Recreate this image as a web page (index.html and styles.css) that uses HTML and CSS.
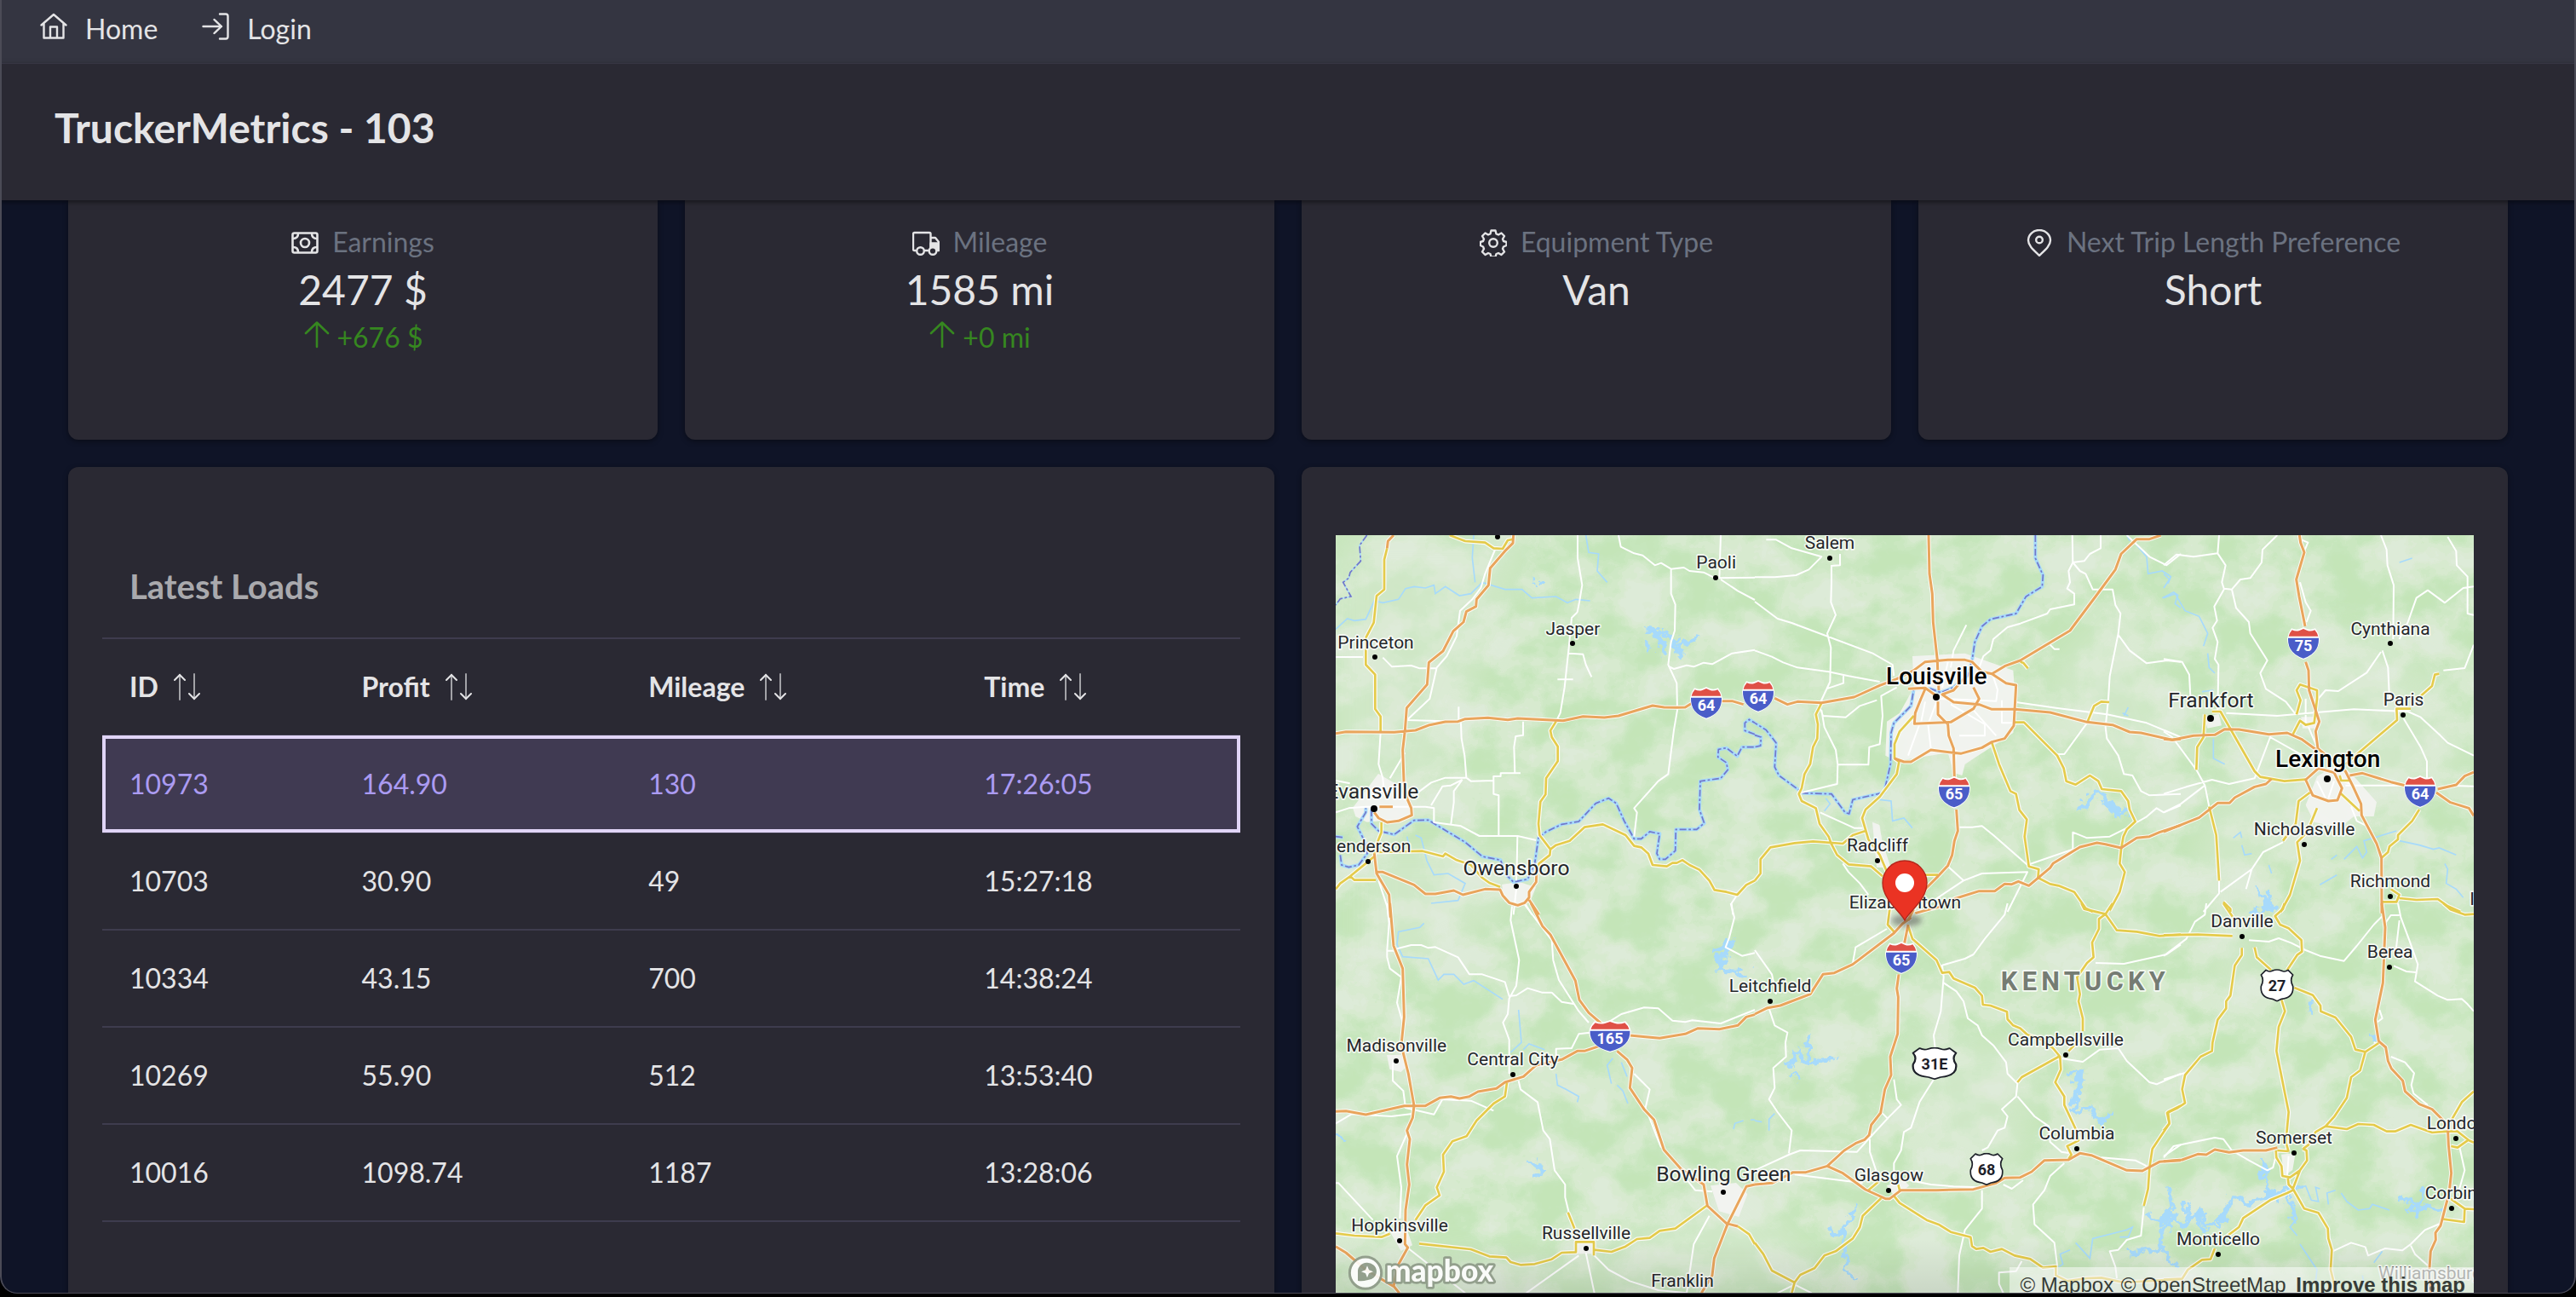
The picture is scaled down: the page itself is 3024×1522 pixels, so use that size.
FILE: index.html
```html
<!DOCTYPE html>
<html lang="en">
<head>
<meta charset="utf-8">
<title>TruckerMetrics - 103</title>
<meta name="viewport" content="width=device-width, initial-scale=1">
<link rel="stylesheet" href="styles.css">
</head>
<body>
<svg class="sprite" aria-hidden="true">
  <symbol id="i-sort" viewBox="0 0 32 32">
    <g fill="none" stroke="currentColor" stroke-width="2" stroke-linecap="round">
      <path d="M7 2V31M24 1V30" opacity=".65"/>
      <path d="M1 8 7 2l6 6M18 24l6 6 6-6"/>
    </g>
  </symbol>
  <symbol id="i-up" viewBox="0 0 32 32">
    <path d="M16 30V2M3 14 16 1.500 29 14" fill="none" stroke="currentColor" stroke-width="2.600" stroke-linecap="round" stroke-linejoin="round"/>
  </symbol>
</svg>
<div class="window">
  <nav class="menubar" aria-label="Main">
    <a class="menu-link" href="#home">
      <svg class="icon" viewBox="0 0 32 32" fill="none" stroke="currentColor" stroke-width="2.400" stroke-linecap="round" stroke-linejoin="round"><path d="M1.500 14.500 16 2l14.500 12.500M4.500 12.500V29.500h23V12.500M12 29V16.500h8V29"/></svg>
      <span>Home</span>
    </a>
    <a class="menu-link" href="#login">
      <svg class="icon" viewBox="0 0 32 32" fill="none" stroke="currentColor" stroke-width="2.400" stroke-linecap="round" stroke-linejoin="round"><path d="M1.500 16H23M14.500 8 23 16l-8.500 8M21 1.500h7a2.500 2.500 0 0 1 2.500 2.500v24a2.500 2.500 0 0 1-2.500 2.500h-7"/></svg>
      <span>Login</span>
    </a>
  </nav>
  <header class="page-header"><h1>TruckerMetrics - 103</h1></header>

  <main class="dashboard">
    <section class="card stat">
      <div class="stat-label">
        <svg class="icon" viewBox="0 0 32 32" fill="none" stroke="currentColor" stroke-width="2.600"><rect x="1.500" y="4.500" width="29" height="23" rx="2"/><circle cx="16" cy="16" r="5"/><path d="M2 11q6 0 6-6M30 11q-6 0-6-6M2 21q6 0 6 6M30 21q-6 0-6 6"/></svg>
        <span>Earnings</span>
      </div>
      <strong class="stat-value">2477 $</strong>
      <div class="stat-delta"><svg class="icon"><use href="#i-up"/></svg><span>+676 $</span></div>
    </section>
    <section class="card stat">
      <div class="stat-label">
        <svg class="icon" viewBox="0 0 32 32" fill="none" stroke="currentColor" stroke-width="2.400" stroke-linejoin="round"><path d="M4.500 25H2.500A1.500 1.500 0 0 1 1 23.500V5.500A1.500 1.500 0 0 1 2.500 4H20a1.500 1.500 0 0 1 1.500 1.500V25H14"/><path d="M21.500 10H27l4 5v10h-2"/><path d="M21.500 16.500H31V24h-3l-4-3-2.500 1z" fill="currentColor"/><circle cx="9.500" cy="25.500" r="4.300"/><circle cx="24" cy="25.500" r="4.300" class="wheel"/></svg>
        <span>Mileage</span>
      </div>
      <strong class="stat-value">1585 mi</strong>
      <div class="stat-delta"><svg class="icon"><use href="#i-up"/></svg><span>+0 mi</span></div>
    </section>
    <section class="card stat">
      <div class="stat-label">
        <svg class="icon" viewBox="0 0 32 32" fill="none" stroke="currentColor" stroke-width="2.400" stroke-linejoin="round"><circle cx="16" cy="16" r="4.800"/><path d="M13.500 1.500h5l1 4 2.500 1 3.500-2 3.500 3.500-2 3.500 1 2.500 3.500 1v4l-3.500 1.500-1 2.500 2 3.500-3.500 3.500-3.500-2-2.500 1-1 3.500h-5l-1-3.500-2.500-1-3.500 2L3 26.500 5 23l-1-2.500L.800 19v-4L4 14l1-2.500L3 8l3.500-3.500 3.500 2 2.500-1z"/></svg>
        <span>Equipment Type</span>
      </div>
      <strong class="stat-value">Van</strong>
    </section>
    <section class="card stat">
      <div class="stat-label">
        <svg class="icon" viewBox="0 0 32 32" fill="none" stroke="currentColor" stroke-width="2.400" stroke-linejoin="round"><path d="M16 30.800C10 25 3 19.500 3 13a13 12 0 0 1 26 0c0 6.500-7 12-13 17.800z"/><circle cx="16" cy="12.500" r="3.800"/></svg>
        <span>Next Trip Length Preference</span>
      </div>
      <strong class="stat-value">Short</strong>
    </section>

    <section class="card panel">
      <h2 class="panel-title">Latest Loads</h2>
      <table class="loads">
        <colgroup><col class="col-id"><col class="col-profit"><col class="col-mileage"><col class="col-time"></colgroup>
        <thead>
          <tr>
            <th scope="col"><button type="button" class="sort">ID <svg class="icon"><use href="#i-sort"/></svg></button></th>
            <th scope="col"><button type="button" class="sort">Profit <svg class="icon"><use href="#i-sort"/></svg></button></th>
            <th scope="col"><button type="button" class="sort">Mileage <svg class="icon"><use href="#i-sort"/></svg></button></th>
            <th scope="col"><button type="button" class="sort">Time <svg class="icon"><use href="#i-sort"/></svg></button></th>
          </tr>
        </thead>
        <tbody>
          <tr class="selected"><td>10973</td><td>164.90</td><td>130</td><td>17:26:05</td></tr>
          <tr><td>10703</td><td>30.90</td><td>49</td><td>15:27:18</td></tr>
          <tr><td>10334</td><td>43.15</td><td>700</td><td>14:38:24</td></tr>
          <tr><td>10269</td><td>55.90</td><td>512</td><td>13:53:40</td></tr>
          <tr><td>10016</td><td>1098.74</td><td>1187</td><td>13:28:06</td></tr>
        </tbody>
      </table>
    </section>

    <section class="card panel" aria-label="Map">
      <div class="map">
      <svg class="map-canvas" viewBox="0 0 4008 2700">
        <defs>
          <filter id="terrain" x="0" y="0" width="1" height="1" color-interpolation-filters="sRGB">
            <feTurbulence type="fractalNoise" baseFrequency="0.006 0.007" numOctaves="5" seed="11"/>
            <feColorMatrix values="1 0 0 0 0  1 0 0 0 0  1 0 0 0 0  0 0 0 0 1"/>
            <feComponentTransfer>
              <feFuncR type="discrete" tableValues=".87 .87 .87 .87 .87 .87 .86 .845 .845 .825 .81 .795 .78 .775 .77 .77 .77 .77 .77 .77"/>
              <feFuncG type="discrete" tableValues=".923 .923 .923 .923 .923 .923 .92 .918 .918 .915 .912 .907 .903 .901 .9 .9 .9 .9 .9 .9"/>
              <feFuncB type="discrete" tableValues=".85 .85 .85 .85 .85 .85 .835 .815 .815 .79 .775 .755 .74 .73 .725 .725 .725 .725 .725 .725"/>
            </feComponentTransfer>
          </filter>
          <filter id="rough" x="-10%" y="-10%" width="120%" height="120%">
            <feTurbulence type="fractalNoise" baseFrequency="0.03" numOctaves="3" seed="4"/>
            <feDisplacementMap in="SourceGraphic" scale="60" xChannelSelector="R" yChannelSelector="G"/>
          </filter>
          <filter id="soft" x="-20%" y="-20%" width="140%" height="140%"><feGaussianBlur stdDeviation="50"/></filter>
          <filter id="pin-shadow" x="-50%" y="-100%" width="200%" height="300%"><feGaussianBlur stdDeviation="9"/></filter>

          <g id="local">
            <g transform="translate(-24 -24)"><path d="M585 75 550 160 535 210 505 250 462 290 450 380 415 450 380 490 355 600 275 675 460 680M24 453H120M190 455l32 32 68-4 30 10h60M876 24v81l16 95-10 60-7 35-20 20-10 105-15 140-15 90-15 30M845 440l50 3 10 37 20 43M805 532h55M1020 24l8 41 47 23 30 7 43 35 22-8 35 21 45-5 20 12 50 5 40 20M1205 143v87l15 38-2 92-13 40-10 80 30 65 2 95-12 70-20 155-35 25-85 95 10 15-10 85M1380 24l-5 151 125-2M1380 180l60 40 60 32M1195 485l20 10 45-13 25 5 35-14 30 5 70-38 80-12M182 720l-7 110 15 50 5 60M268 790l-53 90M457 628v52M465 685l2 55 11 60 6 78 16 12 80-2v47l18 5v143M684 680v48l-26 4-6 38 3 92M580 888v-15h25v-11h70M484 878h-74l-50 17-60 45M470 885l-30 40v40l-10 75M470 885l-40 20-30 3-40 67M24 1000l46-15 60-5h210l30 5v50l95 13 65 35h135l65 15M664 1085l-2 105-2 50M660 1270l-10 90M690 1320l25 40M1438 1290l-20 30 5 40M175 1240l30 90 5 40M24 888l50 10"/></g>
            <g transform="translate(1476 -24)"><path d="M40 40h35l55 30 105 30-45 45-45 20-75 7H0M270 130v60l-2 70 17 45-30 65 13 50-3 120-35 75M300 90v40l-32 2M0 258l80 60 50 15 285 107 70 40 5 40M0 430l60 22 40 20 50 18 110 15 70 15 110 20M312 520v25l-60 20M1118 24l2 96-15 30 5 40-10 22 25 18v38l-85 17-10 15-95 35-45 13-50 42-10 40-25 20-15 40M1218 24v46l-38 20-20 25-40 5 25 30 20 10 25 55h70l10 55 18 30-8 70-30 150-5 80-10 100 5 40 40 60 20 65 30 5 30 55 30 15 110-5M1280 375l40 55 60 45 70-10 50 5M1310 24l80 76 60 30 50-40M920 612l140 20 180 23 140 30 120 50M1170 685l-80 110h-25M235 640l10 60 40 80 7 52h108l3-62 37-10 10-100-5-70 55-30M225 620l15 40 80 5 50-40 60-20M292 832l-2 68-125 30M700 870l10-90M745 340l-45 90-10 60M380 1055h-30l-120-55M720 1052h45l35-4 40 32 120 105 160-55v-60l50 20 80-5 60-30 35-20 35-20 35-30 25 15 60-25M310 1180l20 30 40 40 30 40M600 1330l135-90-55-50M735 1240l65-25 160-5-40 80-30 60M650 600l200 8 5-40-20-60M690 620l120 70v40h-90M870 605v80h45M680 470l-20 90M640 610l-30 80 10 85M600 610l-15 75M540 800l40-110M770 640l80 90M1040 410l15 15h18"/></g>
            <g transform="translate(2916 -24)"><path d="M0 130l45-38 60 8 85-12 5-64M190 88l28 42-13 60 7 22 28 3 30-35 35-5 40-55 3-45 52-51M240 215l15 65 45 50 5 40 60 95-25 45 20 55 70 45 35 45M212 215l-34 60 10 50-16 25 18 50-10 60 13 20-3 160M0 460l65 10 25 45 5 95M765 24l20 51 3 55 22 70-2 190M830 390l30-60 30-85 40-27 60 44 65-52 37-5M1000 30l30 50 2 50 38 40v130l22 5M770 430l20 60 5 110M765 435l-50 73-100 65-45-3-30 35M985 500l75-8 32-82M220 650l180 10 60-5 210-18 190 8 45 20 70 65 25 25 92 45M845 670l60 100 22 50v60M640 905h200M1000 905l92 3M0 715l30 20 85 115 30 55 15 75M0 935l80-25 90-25 60 15 90-20 55-145 115 65M195 1240v45l-55 65M200 1280l110-80 40-60 70-35M0 1000l60-30 85-65M485 40l23 10-13 30M480 190l20 70 18 30-15 40M500 600v90M600 880l60 20M510 700l30 70M540 890l30 60M600 890l-20 60M660 980l20 50 30 15M290 1270l20-70"/></g>
            <g transform="translate(-24 1296)"><path d="M645 10l-5 50 30 140-10 90-25 45-5 55-17 30 22 60v120M240 160l50-13h35l25 10 25-3 80 36 40 60h45l80 27 15 50 25-3 40-25 50 15h35l35 33 45 8M690 5l95 125 5 70 20 70 70 110 35 40M205 0l7 70-7 95v25l10 40 40 30-15 90 20 70M205 167h35M990 415l40-25 80-23 50 3 50 43 45 5 25-6 100 11 120-48M1415 0l13 50-18 70-13 35 58 30 45-10M225 560v65l37 35 8 60 100 23 30-53 100 5 80 35M24 775l56-33 140 8 80-10M280 800l-40 90 15 110-5 110M24 985h10l121 130M668 625l7 30 60 45 20 100 23 30 17 110 37 50v45l13 53M880 1240l-185 132M905 1230l30 142M935 1240l50 50 75 40 100 32 100 10 25-172 55-100M280 1215l200 157M1075 600l55 55-15 65 55 140M800 550v-38l55-2 25-50 40-5M1250 960l40 50 60 5"/></g>
            <g transform="translate(1476 1296)"><path d="M890 0l-10 40-70 85-40 55-30 15-80 23 5 42-10 120-25 85 5 45M630 620l-50 80-30 90-25 15-10 65-25 45v65M665 280l45 30 25 35 15 60 35 25 15 35 40 35 45 60 5 40 35 35-5 45-50 45 20 25-10 40-25 10-35 60-20 10M925 680l60 70 50 35 5 55 40 35 30 5M490 620l10 70 15 20-45 45-65 70-45 50-200-5-40 15L0 940M465 90l-110 65-10 55M0 165l60 85 15 70M50 370l20 60 45 25-7 35 2 50-45 40 5 70-20 40 30 45 50 65-10 80M405 830v45l25 75M140 955l120 15 120 15M545 975l75 15 80 7 90 3M1500 145l-50 35-150 33-100-3M1075 545l80 13 60-43 65-5 30 45 80 75 25 7 85-37M1090 915l-50 45-20 50-40 50 5 70 70 65 10 80M800 1010v65l-60 75-20 90-5 132M875 990l30 15 40-30M1220 895l120 10 40 20M1440 890l60-40M1370 1070l-10 100-50 15-30 35-30 5 20 55 5 40M940 1260l-20 35-60 5v40l15 32M450 740l20 20M80 1372l60-30 60 30"/></g>
            <g transform="translate(2916 1296)"><path d="M150 0l-5 40-35 25-30 60-80 60M300 130l70 5 35-12 45 17 50 25 50 20 85 18 45-53 60-75 30-30M825 0l10 50 30 80 30 85-10 60 80 50 35 15 50-3 20 18 22 25M810 220l45 20 35 3M830 60l-15 130M780 70l20-28h30M0 895l35-40 145-30 30 5 30 40 60 35 65 35 20-10 10-40M0 620l75-23M800 540l50 20 32 38-10 42 8 30 50 40M760 375l10 30-20 15M1040 850l20 90-20 70M595 1225l65-30 50 15 10 30 60-25 60 7 30-22 50-50 60-25M870 1205l15 30 45 40M440 890l-5 70M740 490l35 10"/></g>
          </g>
          <g id="highways">
            <g transform="translate(-24 -24)"><path d="M205 70 195 110V215L168 238 158 332 130 385V480L163 515V636L182 662V715M425 24l55 21 70 5 30 20 32 2 18-30 20-4M800 680l-20 32 5 23 21 33v52l-41 60-2 57-18 25-7 78 4 40 38 50-2 20-38 30-5 20M185 1035v35l-20 50-5 25M165 1140l165-4 72 19 8-10 40 23 50 17 40 45 25 18 38 14M780 1130l20-15 48-15 52-48 65-10 80 38 30 38 25 5 25 22 15 40 50 5 20-12h15l20-10 25 17 35 17 35 38 18 33 42 7 38 10 32-35 30-15M160 1155l-85 70-35 25-16 20M75 1225l15 13h75"/></g>
            <g transform="translate(1476 -24)"><path d="M235 615l-20 40 7 35-2 50-15 30-10 60-20 35-10 50-10 20 10 25 50 25 13 55 32 45 10 27 20 38 40 33 80 7 40 35M0 1240l20-25v-50l35-42 85-15 65-6 105 8 35-30 45-15M560 660l-50 55-18 45v50l16 12-8 43-60 80-50 45-12 30 22 75 40 55 30 70M600 1220h45M935 470l10 3 17 20M1248 612l-28-2-25 15-23 55M915 683h33l117 117 23 45 9 45 33 12 50-32 30 20 12 28 68 7 25 35 5 30 20 42-30 28-12 25-8 45-5 50 18 30-18 70-35 65M835 755l25 75 40 95 20 10 12 57 26 33-8 60 15 105 35 10-3 30 43 22 30 6 55 22 40 57 25 13"/></g>
            <g transform="translate(2916 -24)"><path d="M145 655l-5 80-22 35-3 80M170 645h30l120 210 20 20 85 15 75-6M455 725l25-48 20 15 30-7 10-85v-30l-60-20-12 20 14 35-14 50M970 512l-15 3-10 40-40 35M870 635h-50l2 40-182 155M620 870l5 18h30M620 930l70 65M515 930l-40 30-10 80-45 60M540 985l-35 85-35 35 10 65-35 120-33 60M900 990l-25 40-50 50v15l-30 25-5 20-23 20M800 1270l30 20-10 25h-50M830 1302l60 6 75-3 35 25 45 20M160 980l25 100 10 160M210 1315l25 25v10"/></g>
            <g transform="translate(-24 1296)"><path d="M627 632l-7 48-40 25-60 60-35 55-50 18-33 47 3 60-25 55 10 28-50 35-35 52M24 1162l66 8 95 5 30-12M318 1198l182 20 65 25 60 4 15 16 35 10 50-3 60-17 35-23 50-2v-36h63v48M842 1088l23 57M935 1220l60 7 50-19 40-26 45-4 35-25 55-8 110-80M1440 1137l40 28 20 35"/></g>
            <g transform="translate(1476 1296)"><path d="M475 20l-7 55 24 27M540 80l15 45 85 75 20 45 25-3 15 23 75 32 25 28 3 32 27 3 58 22 2 26 20 22 25 10 25 23 40 12 50 35 25 30 3 45-20 45 32 50v30l40 85 10 40-40 20 15 30-10 15M925 630l15-18 130-72M1155 450v-45l-15-60 5-25-10-60 35-50 23-20-5-52 24-48V55l23-17 25-38M1150 0l10 20 75 18 40 57 70 5 80 15 75-5M1155 470l-50 50M1500 712l-45 23 5 40-30 45-30 45-10 65-5 75-15 60M445 1038l-65 62-10 40-25 40-60 45-40 15-35 45-50 23-20 27-10 37M140 1335l-80-42-30-58-30-40M490 1030l20 25 95 60 45 17 40 25 70 18 5 32 15 10 25-4 25 14 40-10 45 23 55 12 45 31 45-5v32l40 20 70-10 50-2 80 17 200-12M400 1010l35-30M510 1010l-5-20"/></g>
            <g transform="translate(2916 1296)"><path d="M0 112l120-2 122 5M275 157v25l-25 38-15 105-15 20v25l-30 40-18 80-2 30-40 20-55 65-10 50 10 48-25 17-38 18 8 37-20 25M210 0l33 48M425 0l-5 20-28 25 18 30 30 13 45 42 2 40-17 12-35 53M320 155l8 35 50 45M415 340l12 40-22 55-8 85 43 215-10 105 10 35M460 297l65 26 27 37 1 20 52 22 55 68 15 45 35 8 47-31M710 523l-18 65-32 24-15 73-45 67-30 33-35 20-25 45-20 15M570 785l75 10 40-18 55 3 45 23h30l55-23 75 27 55-4h35l40 32 17 7M1012 855l23 5 35-25M1015 760l35-60 42-38M400 870l40 3M395 870l2 25 18 30 3 35 27 5 35-25 25-35-2-35-13-5M437 965l3 25 15 15 25-65M455 1010l-20 10-60 25-95 63-15 32-40 30M180 1215l-15 38-30 2-50 35-20 32-65 3M455 1005l40 70 50 15 33 55 2 35 12 40-4 70 12 50v32M985 0l25 22 50 18 32-2M1010 1040l50 35 32 2M1060 1075l-2 47-73-10"/></g>
          </g>
          <g id="motorways">
            <g transform="translate(-24 -24)"><path d="M228 24l-20 21-3 25M24 722l36-6 170 2 75-7 50-19 55-11 45-1 25-9 80-4 70 7 35-5 160 8 70-15 75 4 50-6 120-36 40 6 45 1 30-1 35-22h130l40 12M650 24l-2 28-28 28-52 60-6 60-42 50-2 25-34 18-10 37-36 32-36 70-50 40-6 78-72 82-6 80-8 68 4 110 11 60 15 35 2 25-47 20-40 5-30-15-15-20M178 980h47M160 1145l8 70 44 75 5 80M168 1210h22l110 45 40 32h35l65-12 32 15 78-20 53 2 9 20 23 26 30 9 25-9 15-18v-20l25-35 2-55M705 1308l35 52"/></g>
            <g transform="translate(1476 -24)"><path d="M612 24l3 136 10 70 3 100 15 135 1 35 4 70M70 598l45 22 35-10 85 4 115-20 90-41 60-23 60-30 40-30 80-7h60l25 7 35 35 35 7 45-27 55-20 175-105 90-120 70-95 20-55 55-52h45l40-14M835 512l50 33 35 7-5 88-3 55-32 45-45 12-35 20-75 21-105-13-70 42h-25l-33-12M600 565l-15 35-20 50-3 38 128-6 80-47 20-35-20-40M540 565l60-3 40 28M735 530l-35 40-40 15 40 27 90 8 45 17h80l125 11 130 34 90 10 60 25 40 3 110 25 30-3M645 610v45l35 35 3 40 17 45 3 105M710 990l5 75-12 35-8 50-15 37-35 38-45 45-30 50-30 60M700 1305l90-28h55l35-25 25 1 23-10 37 15 75-63 10-15 95-58 60-15 30 5 55 13 55-35 45-5 35-15 75-25"/></g>
            <g transform="translate(2916 -24)"><path d="M478 24l4 26 13 35-28 95 10 60 21 105M500 470l10 30 2 70 36 110-13 35 8 60 97 80 25 50 30 65 2 40 53 100 17 50 1 195M0 742l30 3 75-15 75-3 35-20 50 1 105 17 65-5 50 22 60 43M655 870l45-8 100 31 50 12M965 918l65-15 30-31 32-14M960 930l50 35 65 20 17 27M0 1068l125-50 65-51h42l18-19 70-38 40-10 20-18M545 845l-45 40 25 55 55 20 32-3 16-42-28-55z"/></g>
            <g transform="translate(-24 1296)"><path d="M215 0l13 150 32 80 5 170-10 100 25 100 20 113-5 42-20 45 10 30-10 90 8 70-13 90-2 120 10 12-38 68-12 70M24 733l36-2 70 13 135-31h75l50-28 40-5 30 7 35-7 30-17 65-11 30-22 65-20 45-40 90-20 55-30h25l90-30M712 0l40 80 28 30 88 162 14 68 33 45 75 65M1015 520l35 30 18 30-8 70 50 75 35 37 35 106 60 67 80 55 13 75 67 62 40 10M1060 465l55 5 50 5 90-15 45-20 75 3 65-13 30-30 30-8M1500 990l-30 7-65 130-48 123-7 60-38 62M24 1208l36 22 70 60 100 60 18 22"/></g>
            <g transform="translate(1476 1296)"><path d="M0 390l45-22 45-8 105-40 45-70 40-5 65-30L490 105l30-33 30-22M540 75l-13 65M507 250l-7 50 5 30-2 130-26 80 3 65-22 50-15 83-33 42-7 35-16 17-32 13-40 25-60 55-75 22h-50M0 990l60-5 40-20 35-18M255 925l55 25 80 58 70 32h15l40-30h125l130-3 80-22 30-18 55-2 40-20 45-40 85-2 40-23 40 7 125 53 55 2 60-32 75-5M565 35l55-15 40-10"/></g>
            <g transform="translate(2916 1296)"><path d="M768 0l12 85-8 195-27 130 12 75 25 22 8 48 12 27 40 43 8 37 50 45 45 18 55 55 3 70 10 100-8 70-30 115-18 25 1 25-18 40-5 75 5 72M0 908l65-5 55-20 30 2 30-18 50 10 50-7h80l40-10"/></g>
          </g>
          <g id="rivers">
            <g transform="translate(-24 -24)"><path d="M24 1085l26 3M40 1150l5 35 25 8 35-8 30-40-5-35-30-60 30-50v-15M150 990v50l25 25 55 13 70-50 50-1 80 48 50 30 60 50 65 13 15 47 30 30 50-10 25-55 13-90 27-22 55-26 60-10 60-64 45-18 27 18 28 62 35 63h25l30-25 35 7-10 70 10 20h20l35-30 2-75h73l27-22-17-48 3-100 72-10 25-30-5-25-30-20 2-27 28-5 38 29 17-32h45M1500 725l-35-13v-27l15-12 20 12"/></g>
            <g transform="translate(1476 -24)"><path d="M988 24v81l27 60-3 40-57 35-35 60-90 20-30 25-25 55-10 65-15 55-50 40-45 18-35-13h-60l-10 60-60 60-10 35-2 110-23 100-110 25-13 50-14-5-48-65-100-3-85-62-15-30 5-85-35-45-40-25M0 728l22 7-2 30-20 5"/></g>
          </g>
          <symbol id="interstate" viewBox="0 0 120 116">
            <path d="M18 4q14 7 26 3 9-3 16-7 7 4 16 7 12 4 26-3 12 16 15 36 0 52-57 74Q3 92 3 40 6 20 18 4z" fill="#fff"/>
            <path d="M20 10q14 6 26 2l14-6 14 6q12 4 26-2 9 10 12 22H8Q11 20 20 10z" fill="#df5147"/>
            <path d="M6 38h108Q116 92 60 110 4 92 6 38z" fill="#4a5dc8"/>
          </symbol>
          <symbol id="us-route" viewBox="0 0 120 116">
            <path d="M21 4q11 8 22 3 9-4 17-4 8 0 17 4 11 5 22-3l17 17q-12 18 0 40 4 40-40 45l-16 7-16-7Q0 101 4 61q12-22 0-40z" fill="#fff" stroke="#1d2029" stroke-width="5" stroke-linejoin="round"/>
          </symbol>
          <linearGradient id="dusk" x1="0" y1="0" x2="0" y2="1"><stop offset="0" stop-opacity="0"/><stop offset="1" stop-opacity=".1"/></linearGradient>
        </defs>

        <rect width="4008" height="2700" filter="url(#terrain)"/>
        <g class="plains" filter="url(#soft)">
          <path d="M0 0H700L500 500 350 900 0 1000zM2500 500l300-300 200 600-300 100zM3100 900l400-600 400 200 100 300-500 300-500 100zM100 1100l700 0-300 300-400 200zM3050 1150l150 0 50 500-150 50zM2000 1750l500 50-100 500-300-100zM0 2500l900 50 500-300 400 400H0z"/>
        </g>
        <g class="urban">
          <path d="M2031 426l185-10 170 60 10 140-10 80-170 110-10 40-30-10-20-70-180 30-40-20 5-120 45-30 50-90zM3456 850l80-50 60 60 70 80-10 50-70 0-50 40-90-20-30-60zM60 960l90-120 70 40 50 100-40 20-120 10-40-20zM585 1230l60-10 60 20-20 50-50 20-40-20zM1320 2290l90-10 40 40-30 80-70-20zM180 1830l50 0 20 40-20 20-40-10zM190 2450l60-10 20 60-40 20zM850 2490l50 0 10 40-60 0zM1890 1010l25 10 10 60 30 90-50 0zM3400 640l50 0 5 40-50 0zM3060 640l50-10 10 40-50 10zM1940 2290l60-20 20 20-50 40zM3330 2180l50-5-10 60-30 20z"/>
        </g>
        <g class="streams">
          <g transform="translate(-24 -24)"><path d="M24 355l41-37 25 7 40-5 30-65 30 7 55-12 25-38 30-7 40 5 30-10 5 30 35-25 50 32 40-7 40-40 80 25h60l35 30 85-5 40 22 30-12 50 5M510 24l-5 80 10 86M905 24l10 61 35 5-5 60 35 40M275 1085l10 40M305 1080l20 10 20 80 25 50 50-5 60 35-25 60-95 10"/></g>
          <g transform="translate(1476 -24)"><path d="M440 955l40 5 5 70 40-10 30 35M250 950l15 20-20 25M1310 24l10 20M1345 60l35 40 5 60 50-10 30 20-10 25M1435 245l40-20 15 10-10 30 20 15M1300 660l15-30M1295 650l20 10"/></g>
          <g transform="translate(2916 -24)"><path d="M0 160l20 20-20 30M0 245l40-15 35 60 50 20 30 60-15 45M155 440l5 50 20 20M175 740v70l40 20M135 575l40-5M245 1090l25-20 5 20M275 1115l10 35 25-5M590 1165l20-15M635 1165l45-45 20 40 15-20-10-40 115-35M830 1100l70 15 50 15 20-5 60 25M990 1180l10 20-5 50 35 20 25 30M370 1185l10 30M550 1255l60-35M830 120l45-15"/></g>
          <g transform="translate(-24 1296)"><path d="M335 70l-15 15-75 15-5 45 20 43 90 7 35 75 20-20 35 0 35 35 35-13 102 66M668 375l10 115-38 35M685 515l20-20 55 20M800 600l5 40 30 15 45 25-5 20M1000 545l-20 25 15 65M1030 560l20 50M1015 640l20 20 18 45M1425 795l5-20 30-10M1485 762l15 0"/></g>
          <g transform="translate(1476 1296)"><path d="M0 765l25 5M70 740l-20 20 0 40M1070 1280l15-10-10-35 35-15M1130 1195l50 55 10-70 120-30 20-10-15 35-30 0"/></g>
          <g transform="translate(2916 1296)"><path d="M450 1010l50-15 20 50 25 5-10-50 15 5M580 1060l-5-40 30-10M625 1020l20 30 40 30 40-5 10-15 60 20M450 1060l20 50-25 30 25 30M480 1200l60 90-5 40M770 1225l-30 40M700 1310l10 60"/></g>
        </g>
        <g class="lakes" filter="url(#rough)">
          <g transform="translate(6 6)">
            <path d="M1075 330l100 10 20 50 80-40M1130 340l20 80M1080 370l20 30M1195 380l20 50M695 160l40 0M2610 960l60-60 40 30 50 30M2700 940l60 40 40-10M3230 1240l50 60-60 30M3280 1240l10 80M1310 1460l80-40-50 100 110 20M1350 1460l-10 60M670 2200l50 15-20 40M1590 1860l30-50 30 40 110-10M1660 1750l0 100M1600 1890l30 20M10 2110l20 20M3420 1640l10 30M2570 1880l50 0-20 80-10 60 60-10 50 60 20-40M2600 1900l20 50M3650 1760l0 20"/>
            <path d="M1720 2440l40 10 50-60 20-30M1780 2450l10 100 20 60M1740 2460l50-10"/>
            <path d="M2790 2520l100-10 50-140M2840 2380l60 40 40-60M2920 2370l60 60 60-50 20 40 50 0 40-100 80 30 90-40 90-30M2980 2330l20 80M2900 2500l60 70M3030 2400l30 60M3250 2180l20 100 40 60M3350 2310l20 100M2930 2290l10 80" />
            <path d="M3750 2330l60 20 20-60M3760 2380l60-20 60 20 30-20M3800 2360l10 40"/>
          </g>
        </g>
        <use href="#rivers" class="river"/>
        <g class="stream-main"><path d="M110 0 84 36l4 55-37 40-5 20-20 15 28 50-38 8-16 22"/></g>
        <use href="#rivers" class="state-line"/>
        <path class="state-line" d="M110 0 84 36l4 55-37 40-5 20-20 15 28 50-38 8-16 22"/>
        <use href="#local" class="local"/>
        <use href="#highways" class="casing"/>
        <use href="#motorways" class="casing"/>
        <use href="#highways" class="highway"/>
        <use href="#motorways" class="motorway"/>

        <g class="shields">
          <use href="#interstate" x="1245" y="534" width="120" height="116"/><text x="1305" y="617">64</text>
          <use href="#interstate" x="1428" y="510" width="120" height="116"/><text x="1488" y="593">64</text>
          <use href="#interstate" x="2118" y="848" width="120" height="116"/><text x="2178" y="931">65</text>
          <use href="#interstate" x="3348" y="324" width="120" height="116"/><text x="3408" y="407">75</text>
          <use href="#interstate" x="3759" y="846" width="120" height="116"/><text x="3819" y="929">64</text>
          <use href="#interstate" x="1932" y="1431" width="120" height="116"/><text x="1992" y="1514">65</text>
          <g transform="translate(888 1707) scale(1.300 1)"><use href="#interstate" width="120" height="116"/></g><text x="966" y="1790">165</text>
          <g transform="translate(2028 1802) scale(1.350 1)"><use href="#us-route" width="120" height="116"/></g><text class="dark" x="2109" y="1881">31E</text>
          <use href="#us-route" x="2232" y="2174" width="120" height="116"/><text class="dark" x="2292" y="2253">68</text>
          <use href="#us-route" x="3255" y="1527" width="120" height="116"/><text class="dark" x="3315" y="1606">27</text>
        </g>

        <g class="dots">
          <circle cx="570" cy="6" r="9"/><circle cx="138" cy="429" r="9"/><circle cx="834" cy="381" r="9"/><circle cx="1338" cy="150" r="9"/><circle cx="135" cy="963" r="12"/><circle cx="114" cy="1149" r="9"/><circle cx="636" cy="1236" r="9"/>
          <circle cx="1740" cy="81" r="9"/><circle cx="2115" cy="570" r="12"/><circle cx="1908" cy="1146" r="9"/>
          <circle cx="3714" cy="381" r="9"/><circle cx="3081" cy="645" r="12"/><circle cx="3759" cy="633" r="9"/><circle cx="3492" cy="858" r="12"/><circle cx="3411" cy="1089" r="9"/><circle cx="3714" cy="1272" r="9"/>
          <circle cx="213" cy="1851" r="9"/><circle cx="624" cy="1899" r="9"/><circle cx="1365" cy="2313" r="9"/><circle cx="225" cy="2484" r="9"/><circle cx="882" cy="2511" r="9"/>
          <circle cx="1530" cy="1641" r="9"/><circle cx="2571" cy="1830" r="9"/><circle cx="2610" cy="2160" r="9"/><circle cx="1947" cy="2307" r="9"/>
          <circle cx="3192" cy="1413" r="9"/><circle cx="3711" cy="1521" r="9"/><circle cx="3375" cy="2175" r="9"/><circle cx="3945" cy="2124" r="9"/><circle cx="3930" cy="2370" r="9"/><circle cx="3108" cy="2532" r="9"/><circle cx="3861" cy="2652" r="9"/>
        </g>

        <g class="labels">
          <text x="141" y="398">Princeton</text><text x="835" y="350">Jasper</text><text x="1340" y="118">Paoli</text><text x="134" y="1117">enderson</text>
          <text x="1740" y="48">Salem</text><text x="1908" y="1113">Radcliff</text><text x="2005" y="1314">Elizabethtown</text>
          <text x="3714" y="350">Cynthiana</text><text x="3761" y="600">Paris</text><text x="3411" y="1056">Nicholasville</text><text x="3714" y="1240">Richmond</text><text x="4002" y="1302">I</text>
          <text x="214" y="1818">Madisonville</text><text x="624" y="1866">Central City</text><text x="225" y="2451">Hopkinsville</text><text x="882" y="2479">Russellville</text><text x="1221" y="2646">Franklin</text>
          <text x="1530" y="1609">Leitchfield</text><text x="2571" y="1797">Campbellsville</text><text x="2610" y="2126">Columbia</text><text x="1948" y="2275">Glasgow</text>
          <text x="3192" y="1380">Danville</text><text x="3713" y="1487">Berea</text><text x="3375" y="2143">Somerset</text><text x="3108" y="2500">Monticello</text>
          <text class="from" x="3842" y="2091">London</text><text class="from" x="3836" y="2338">Corbin</text><text class="from faded" x="3672" y="2618">Williamsburg</text>
          <text class="town" x="130" y="926">Evansville</text><text class="town" x="636" y="1198">Owensboro</text><text class="town" x="3082" y="606">Frankfort</text><text class="town" x="1366" y="2275">Bowling Green</text>
          <text class="city" x="2116" y="526">Louisville</text><text class="city" x="3494" y="815">Lexington</text>
          <text class="state" x="2640" y="1603">KENTUCKY</text>
        </g>

        <ellipse cx="2010" cy="1356" rx="54" ry="22" fill="#222" opacity=".4" filter="url(#pin-shadow)"/>
        <path d="M2004 1356c-14-30-78-72-78-132a78 78 0 0 1 156 0c0 60-64 102-78 132z" fill="#ea3323" stroke="#b3261b" stroke-width="4"/>
        <circle cx="2004" cy="1224" r="33" fill="#fff"/>

        <rect y="2480" width="4008" height="220" fill="url(#dusk)"/>
        <g class="brand">
          <circle cx="105" cy="2597" r="56" fill="#fff" stroke="#8d9987" stroke-width="9"/>
          <path d="M78 2625V2595a33 31 0 1 1 32 28q-14 4-32 2z" fill="#8d9987"/>
          <path d="M111 2572l6 15 15 6-15 6-6 15-6-15-15-6 15-6z" fill="#fff"/>
          <text x="176" y="2627">mapbox</text>
        </g>
      </svg>
      <div class="attribution"><a href="#mapbox">© Mapbox</a> <a href="#osm">© OpenStreetMap</a> <a class="improve" href="#improve">Improve this map</a></div>
      </div>
    </section>
  </main>
</div>
</body>
</html>
```
FILE: styles.css
```css
* { box-sizing: border-box; }

body {
  margin: 0;
  background: #000;
  color: #e4e4e6;
  font-family: Lato, "Noto Sans", sans-serif;
  font-size: 32px;
  line-height: 38px;
}

h1, h2 { margin: 0; }

.sprite { display: none; }

.icon {
  width: 32px;
  height: 32px;
  flex: none;
}

/* Browser window: rounded at the bottom, with a thin light edge */
.window {
  position: relative;
  height: calc(100vh - 4px);
  overflow: hidden;
  background: #0f1427;
  border-radius: 0 0 20px 20px;
}

.window::after {
  content: "";
  position: absolute;
  inset: 0;
  border: solid #4b4b56;
  border-width: 0 2px 1px;
  border-radius: 0 0 20px 20px;
  pointer-events: none;
  z-index: 3;
}

.menubar {
  display: flex;
  gap: 52px;
  height: 75px;
  padding: 15px 47px 0;
  background: #343541;
  border-bottom: 1px solid #3e3c4c;
}

.menu-link {
  display: flex;
  gap: 21px;
  color: inherit;
  text-decoration: none;
}

.page-header {
  position: relative;
  z-index: 2;
  padding: 45px 64px 56px;
  background: #2a2933;
  box-shadow: 0 2px 6px rgba(0, 0, 0, .5);
}

.page-header h1 {
  font-size: 48px;
  line-height: 59px;
}

.dashboard {
  display: grid;
  grid-template-columns: repeat(4, 1fr);
  gap: 32px;
  padding: 0 80px;
}

.card {
  background: #2a2933;
  border-radius: 12px;
  box-shadow: 0 2px 6px rgba(0, 0, 0, .4);
}

.stat {
  display: flex;
  flex-direction: column;
  align-items: center;
  gap: 8px;
  min-height: 281px;
  padding-top: 30px;
  border-radius: 0 0 12px 12px;
}

.stat-label {
  display: flex;
  gap: 16px;
}

.stat-label span { color: #6b7280; }
.stat-label .icon { margin-top: 4px; }
.stat-label .wheel { fill: #2a2933; }

.stat-value {
  font-size: 48px;
  font-weight: 400;
  line-height: 58px;
}

.stat-delta {
  display: flex;
  gap: 8px;
  color: #368720;
}

.panel {
  grid-column: span 2;
  min-height: 1100px;
  padding: 80px 40px;
}

.panel-title {
  padding: 36px 32px;
  font-size: 40px;
  line-height: 48px;
  color: #a9a9ad;
}

.loads {
  width: 100%;
  table-layout: fixed;
  border-collapse: collapse;
}

.col-id { width: 20.400%; }
.col-profit { width: 25.200%; }
.col-mileage { width: 29.500%; }

.loads th,
.loads td {
  height: 114px;
  padding: 0 32px;
  text-align: left;
  border-bottom: 2px solid #3e3c4e;
}

.loads thead th { border-top: 2px solid #3e3c4e; }

.loads .selected {
  background: #403a52;
  color: #ab9bf2;
  outline: 4px solid #e0d4f7;
  outline-offset: -4px;
}

.sort {
  display: flex;
  align-items: center;
  gap: 18px;
  padding: 0;
  border: 0;
  background: none;
  color: inherit;
  font: inherit;
  font-weight: 700;
}

.map {
  position: relative;
  overflow: hidden;
}

.map-canvas {
  display: block;
  width: 100%;
  font-family: Roboto, sans-serif;
}

.plains { fill: #e1ecdc; opacity: .4; }
.urban { fill: #f4f4f2; opacity: .9; }
.lakes path { fill: none; stroke: #a7dafb; stroke-width: 16; }
.streams path, .stream-main path { fill: none; stroke: #a7dafb; stroke-width: 5; }
.river { fill: none; stroke: #a7dafb; stroke-width: 12; stroke-linejoin: round; }
.state-line { fill: none; stroke: #7277c8; stroke-width: 5; stroke-dasharray: 24 8 8 8; }
.local { fill: none; stroke: #fff; stroke-width: 6; stroke-linejoin: round; }
.casing { fill: none; stroke: #fbfbf5; stroke-width: 15; stroke-linejoin: round; }
.highway { fill: none; stroke: #e4cb4b; stroke-width: 8; stroke-linejoin: round; }
.motorway { fill: none; stroke: #e9a55c; stroke-width: 9; stroke-linejoin: round; }

.shields text {
  fill: #fff;
  font-size: 54px;
  font-weight: 700;
  text-anchor: middle;
}

.shields .dark { fill: #1d2029; }

.labels text {
  fill: #25272b;
  stroke: rgba(255, 255, 255, .8);
  stroke-width: 10;
  stroke-linejoin: round;
  paint-order: stroke;
  font-size: 63px;
  text-anchor: middle;
}

.labels .from { text-anchor: start; }
.labels .faded { fill: #6c706a; }
.labels .town { font-size: 74px; }
.labels .city { font-size: 84px; font-weight: 500; fill: #000; }

.labels .state {
  fill: #757c73;
  font-size: 92px;
  font-weight: 700;
  letter-spacing: 16px;
}

.brand { opacity: .9; }

.brand text {
  fill: #fff;
  stroke: #8d9987;
  stroke-width: 16;
  stroke-linejoin: round;
  paint-order: stroke;
  font-family: Lato, sans-serif;
  font-size: 106px;
  font-weight: 900;
}

.attribution {
  position: absolute;
  right: 0;
  bottom: 0;
  padding: 1px 10px 0;
  background: rgba(255, 255, 255, .5);
  font-family: "Liberation Sans", Arial, sans-serif;
  font-size: 24px;
  line-height: 40px;
  white-space: nowrap;
}

.attribution a {
  margin-left: 2px;
  color: #363b36;
  text-decoration: none;
}

.attribution .improve {
  margin-left: 5px;
  font-weight: 700;
}
```
